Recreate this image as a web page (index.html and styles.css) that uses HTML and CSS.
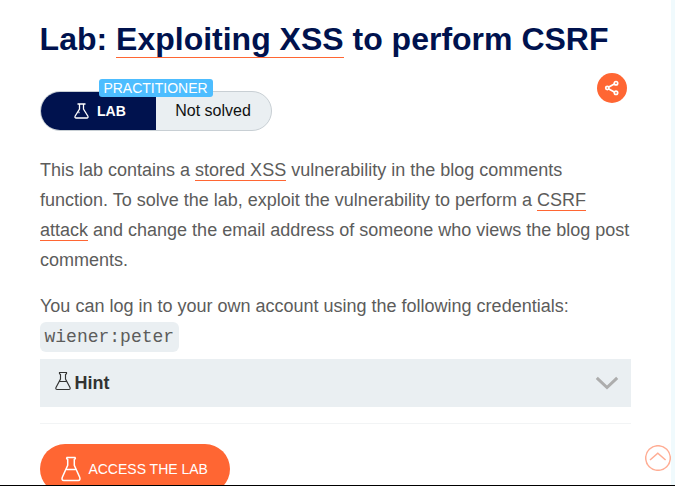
FILE: index.html
```html
<!DOCTYPE html>
<html lang="en">
<head>
<meta charset="utf-8">
<title>Lab: Exploiting XSS to perform CSRF</title>
<link rel="stylesheet" href="styles.css">
</head>
<body>
<main class="page">
  <h1 class="title">Lab: <a class="link" href="#">Exploiting XSS</a> to perform CSRF</h1>
  <div class="meta">
    <div class="status">
      <div class="status-type">
        <svg class="status-icon" viewBox="0 0 15 16"><path d="M3.500 1h8M5.500 1v5L1.200 13Q.3 15 2.300 15h10.400q2 0 1.100-2L9.500 6V1M4.500 9.500h1"/></svg>
        <span>LAB</span>
      </div>
      <div class="status-state">Not solved</div>
      <span class="level">PRACTITIONER</span>
    </div>
    <a class="share" href="#" aria-label="Share">
      <svg width="30" height="30" viewBox="0 0 30 30"><path d="M17.300 10.900l-5.500 3.200M11.800 16l5.500 3"/><circle cx="10.300" cy="15" r="1.600"/><circle cx="19" cy="10.200" r="1.700"/><circle cx="19" cy="19.800" r="1.700"/></svg>
    </a>
  </div>
  <p class="text">This lab contains a <a class="link" href="#">stored XSS</a> vulnerability in the blog comments function. To solve the lab, exploit the vulnerability to perform a <a class="link" href="#">CSRF attack</a> and change the email address of someone who views the blog post comments.</p>
  <p class="text login">You can log in to your own account using the following credentials: <code class="code">wiener:peter</code></p>
  <div class="hint">
    <svg class="hint-icon" viewBox="0 0 16 20"><path d="M4.500 1.500h7v1.300l-1 .7v4.500L15 16.500q.7 2-1.200 2H2.200q-1.900 0-1.200-2L5.500 8V3.500l-1-.7zM4.800 10.500h6.400"/></svg>
    <span class="hint-label">Hint</span>
    <svg class="chevron" viewBox="0 0 24 14"><path d="M1.800 1.800L12 11.500 22.200 1.800"/></svg>
  </div>
  <hr class="rule">
  <a class="button" href="#">
    <svg class="button-icon" viewBox="0 0 20 26"><path d="M6 1.500h8q1 1.200-.7 2v5.800l5.400 11.900q1 3.300-1.500 3.300H2.800q-2.500 0-1.500-3.300L6.700 9.300V3.500Q5 2.700 6 1.500zM5.500 13.500h9"/></svg>
    <span>ACCESS THE LAB</span>
  </a>
</main>
<div class="side-strip"></div>
<a class="to-top" href="#" aria-label="Back to top">
  <svg width="26" height="26" viewBox="0 0 26 26"><circle cx="13" cy="13" r="12.300"/><path d="M5 15l7.800-6.800L20.600 15"/></svg>
</a>
<div class="bottom-edge"></div>
</body>
</html>
```

FILE: styles.css
```css
* { box-sizing: border-box; }
html, body { height: 100%; overflow: hidden; }
body {
  margin: 0;
  background: #fff;
  color: #5c5c5b;
  font-family: "Liberation Sans", Arial, sans-serif;
}
svg { fill: none; stroke: currentColor; display: block; }
.page { width: 671px; padding: 19px 40px 0; }
.title {
  margin: 0 0 0 -0.4px;
  color: #00124e;
  font-size: 32px;
  line-height: 40px;
  white-space: nowrap;
}
.link {
  color: inherit;
  text-decoration: none;
  border-bottom: 1px solid #ff6633;
}
.title .link { display: inline-block; height: 39px; }
.meta {
  display: flex;
  justify-content: space-between;
  align-items: flex-start;
  margin-top: 14px;
}
.status {
  position: relative;
  display: flex;
  width: 232px;
  height: 40px;
  margin-top: 18px;
  border: 1px solid #c8cfd4;
  border-radius: 20px;
  background: #eaeff2;
  color: #111;
}
.status-type {
  display: flex;
  align-items: center;
  width: 115px;
  padding-left: 33px;
  gap: 8px;
  border-radius: 19px 0 0 19px;
  background: #00124e;
  color: #fff;
  font-size: 14px;
  font-weight: bold;
}
.status-icon { width: 15px; height: 16px; stroke-width: 1.3; }
.status-state { flex: 1; padding-right: 1px; text-align: center; font-size: 16px; line-height: 38px; }
.level {
  position: absolute;
  left: 58px;
  top: -13px;
  width: 114px;
  height: 18px;
  padding-right: 1px;
  border-radius: 3px;
  background: #4dbdff;
  color: #fff;
  font-size: 14px;
  line-height: 18px;
  text-align: center;
}
.share {
  width: 30px;
  height: 30px;
  margin-right: 4px;
  border-radius: 50%;
  background: #ff6633;
  color: #fff;
}
.share svg { stroke-width: 1.700; }
.text { margin: 24px 0 0; font-size: 18px; line-height: 30px; }
.login { margin-top: 16px; }
.code {
  display: inline-block;
  width: 139px;
  height: 30px;
  margin-top: 1px;
  padding-left: 4.500px;
  border-radius: 6px;
  background: #eaeff2;
  font-family: "Liberation Mono", monospace;
  font-size: 18px;
  line-height: 30px;
  vertical-align: top;
}
.hint {
  display: flex;
  align-items: center;
  height: 48px;
  margin-top: 7px;
  padding: 0 12px 0 15px;
  background: #eaeff2;
  color: #333332;
}
.hint-icon { width: 16px; height: 20px; margin-top: -5px; stroke-width: 1.150; }
.hint-label { margin-left: 3.600px; font-size: 18px; font-weight: bold; }
.chevron { width: 24px; height: 14px; margin-left: auto; color: #adadad; stroke-width: 3; }
.rule { height: 1px; margin: 16px 0 20px; border: 0; background: #f2f4f5; }
.button {
  display: flex;
  align-items: center;
  width: 190px;
  height: 50px;
  padding-left: 21px;
  gap: 7.400px;
  border-radius: 25px;
  background: #ff6633;
  color: #fff;
  font-size: 14px;
  text-decoration: none;
  white-space: nowrap;
}
.button-icon { width: 20px; height: 26px; stroke-width: 1.500; }
.side-strip { position: fixed; top: 0; right: 0; bottom: 0; width: 4px; background: #f0fafd; }
.to-top { position: fixed; right: 4px; bottom: 15px; color: #ffad94; }
.to-top svg { stroke-width: 1.500; }
.bottom-edge { position: fixed; left: 0; right: 0; bottom: 0; height: 1px; background: #000; }
```
